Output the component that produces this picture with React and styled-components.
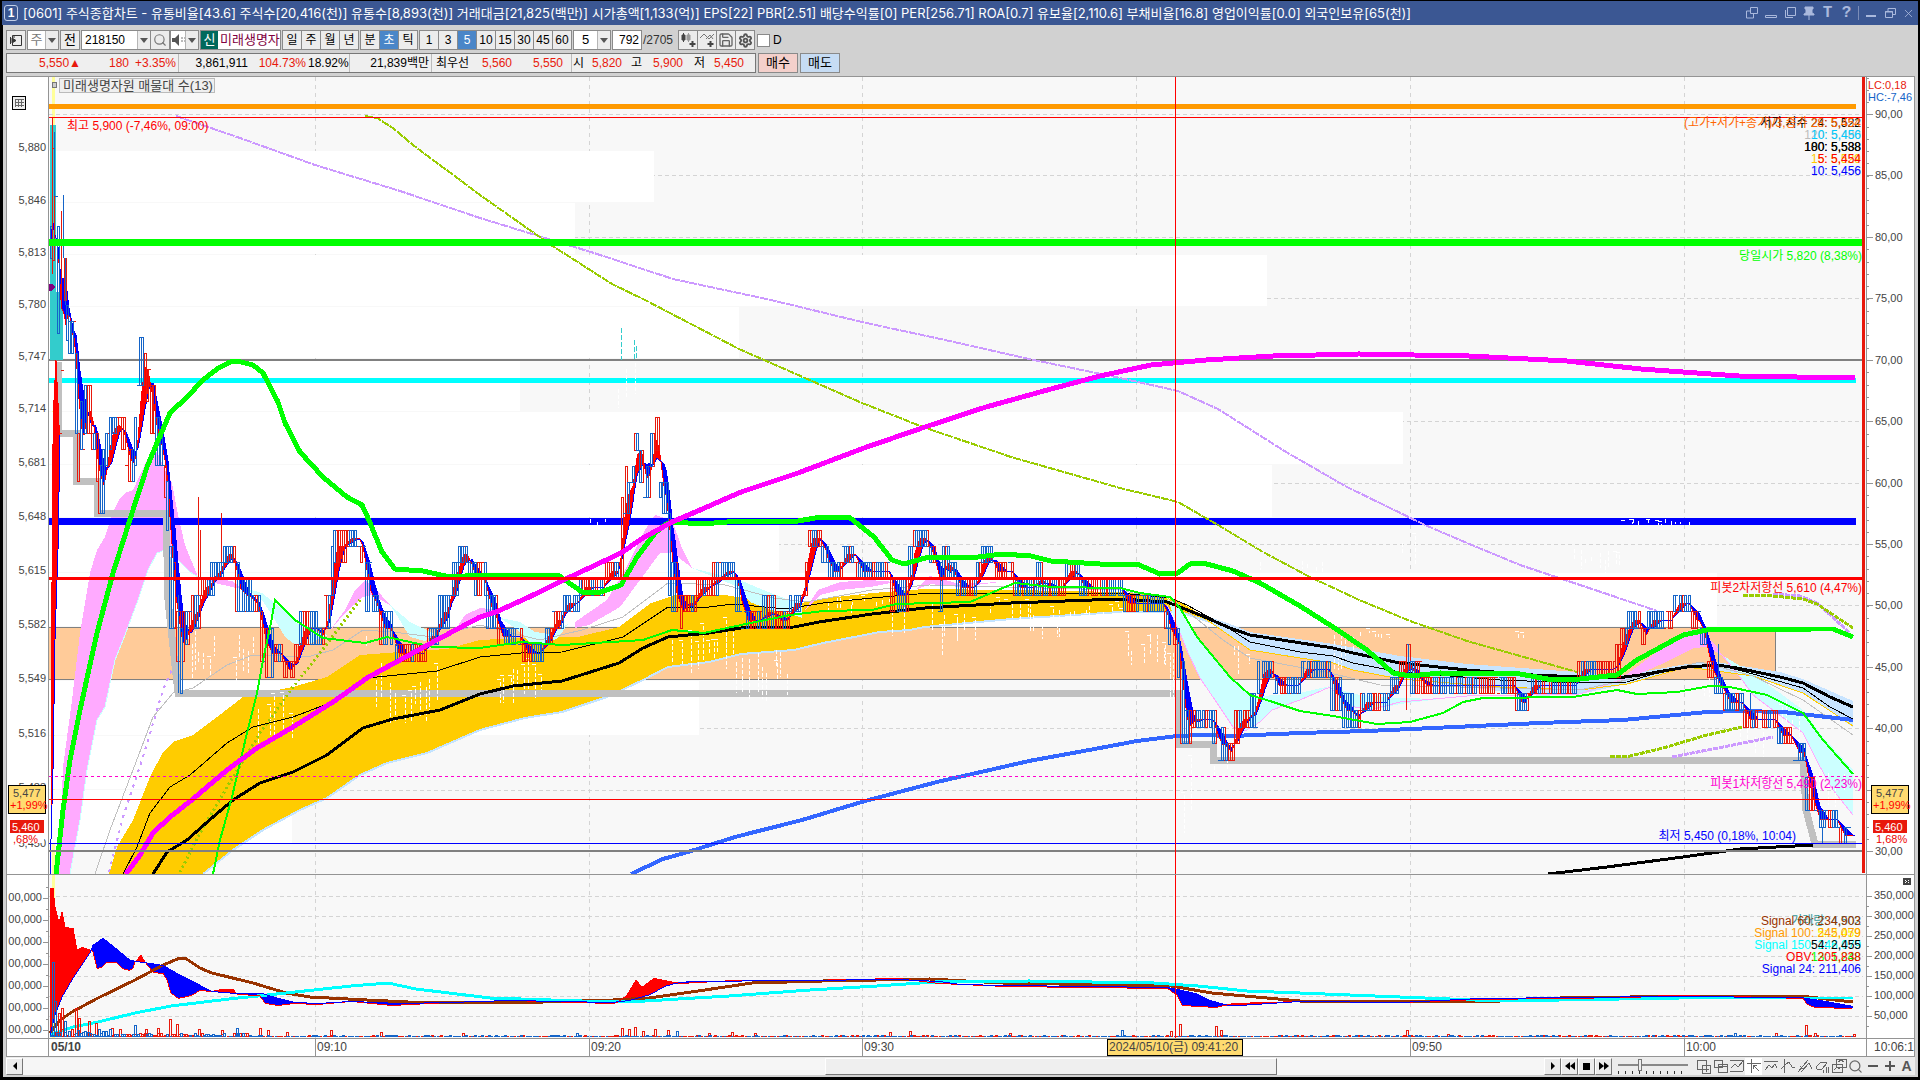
import React, { useState } from "react";
import styled, { createGlobalStyle } from "styled-components";
import { Search, Settings, Save, X } from "lucide-react";

// =========================================================
// 데이터
// =========================================================

const TITLE =
  "[0601] 주식종합차트 - 유통비율[43.6] 주식수[20,416(천)] 유통수[8,893(천)] 거래대금[21,825(백만)] 시가총액[1,133(억)] EPS[22] PBR[2.51] 배당수익률[0] PER[256.71] ROA[0.7] 유보율[2,110.6] 부채비율[16.8] 영업이익률[0.0] 외국인보유[65(천)]";

const PERIODS = ["일", "주", "월", "년"];
const UNITS = ["분", "초", "틱"];
const STEPS = ["1", "3", "5", "10", "15", "30", "45", "60"];

const QUOTES = [
  { text: "5,550▲", width: 76, red: true },
  { text: "180", width: 48, red: true },
  { text: "+3.35%", width: 48, red: true, line: true },
  { text: "3,861,911", width: 71 },
  { text: "104.73%", width: 58, red: true },
  { text: "18.92%", width: 42, line: true },
  { text: "21,839백만", width: 82, line: true },
  { text: "최우선", width: 39 },
  { text: "5,560", width: 43, red: true },
  { text: "5,550", width: 58, red: true, line: true, pad: 8 },
  { text: "시", width: 14 },
  { text: "5,820", width: 38, red: true },
  { text: "고", width: 20 },
  { text: "5,900", width: 41, red: true },
  { text: "저", width: 22 },
  { text: "5,450", width: 39, red: true },
];

// [시작 x, 고가 y, 저가 y]
const SEGMENTS = [
  [50, 226, 258], [52, 148, 260], [54, 196, 320], [57, 226, 333], [59, 300, 433],
  [61, 290, 370], [63, 258, 300], [65, 305, 340], [68, 321, 353], [72, 321, 369],
  [75, 353, 433], [77, 433, 481], [80, 401, 449], [84, 385, 433], [91, 433, 449],
  [94, 433, 481], [97, 465, 513], [101, 449, 513], [105, 433, 465], [108, 417, 449],
  [112, 417, 433], [120, 417, 449], [124, 433, 465], [127, 449, 481], [134, 417, 465],
  [137, 385, 417], [139, 337, 385], [143, 353, 385], [146, 369, 401], [150, 385, 433],
  [154, 417, 465], [159, 433, 465], [163, 465, 497], [166, 481, 530], [169, 546, 628],
  [172, 562, 628], [176, 611, 661], [180, 628, 693], [182, 611, 661], [185, 611, 644],
  [190, 595, 628], [199, 579, 595], [209, 562, 595], [214, 562, 579], [222, 546, 562],
  [234, 562, 611], [240, 579, 611], [250, 595, 611], [259, 611, 661], [265, 628, 677],
  [272, 644, 661], [282, 661, 677], [293, 644, 661], [299, 611, 644], [317, 628, 644],
  [324, 595, 628], [329, 546, 595], [332, 530, 562], [345, 530, 546], [360, 546, 562],
  [364, 562, 611], [370, 595, 611], [378, 611, 644], [392, 644, 661], [425, 628, 644],
  [437, 595, 628], [449, 562, 595], [457, 546, 562], [468, 562, 579], [473, 562, 595],
  [486, 595, 628], [496, 628, 644], [521, 644, 661], [542, 628, 644], [551, 611, 628],
  [562, 595, 611], [579, 579, 595], [605, 562, 579], [619, 497, 577], [622, 466, 513],
  [626, 482, 513], [630, 466, 482], [634, 433, 450], [639, 450, 482], [643, 466, 497],
  [649, 433, 466], [653, 417, 450], [658, 482, 497], [662, 482, 513], [667, 513, 595],
  [670, 562, 611], [676, 595, 628], [684, 595, 611], [696, 579, 595], [711, 562, 595],
  [721, 562, 579], [735, 579, 611], [741, 611, 628], [762, 595, 628], [774, 611, 628],
  [789, 595, 611], [801, 562, 595], [806, 530, 546], [821, 546, 562], [827, 562, 579],
  [841, 546, 562], [856, 562, 579], [890, 579, 611], [908, 546, 579], [913, 530, 546],
  [927, 546, 562], [935, 562, 611], [941, 546, 579], [949, 562, 579], [955, 579, 595],
  [976, 562, 579], [981, 546, 562], [991, 562, 579], [1013, 579, 595], [1035, 562, 595],
  [1043, 579, 595], [1064, 562, 579], [1078, 579, 595], [1122, 595, 611], [1164, 611, 628],
  [1168, 628, 644], [1176, 628, 677], [1180, 661, 743], [1183, 710, 743], [1190, 710, 727],
  [1212, 710, 743], [1215, 727, 760], [1225, 743, 760], [1233, 710, 743], [1238, 710, 727],
  [1250, 693, 727], [1257, 661, 693], [1262, 661, 677], [1272, 677, 693], [1300, 661, 677],
  [1330, 677, 710], [1340, 693, 727], [1352, 710, 727], [1360, 693, 710], [1388, 677, 693],
  [1399, 661, 677], [1404, 644, 677], [1410, 661, 693], [1420, 677, 693], [1515, 693, 710],
  [1527, 677, 693], [1577, 661, 677], [1615, 644, 677], [1619, 628, 644], [1627, 611, 628],
  [1640, 628, 644], [1647, 611, 628], [1673, 595, 611], [1690, 611, 628], [1700, 628, 644],
  [1706, 661, 677], [1714, 677, 693], [1723, 693, 710], [1743, 710, 727], [1776, 727, 743],
  [1792, 743, 760], [1805, 777, 810], [1813, 810, 827], [1838, 827, 843],
];

// 매물대 막대: [y, 높이, 오른쪽 끝 x]
const VOLUME_ROWS = [
  [151, 51, 654], [203, 51, 575], [255, 51, 1267], [307, 51, 739], [361, 50, 520],
  [412, 52, 1403], [465, 52, 1272], [518, 54, 779], [573, 53, 1717], [681, 54, 699],
  [736, 53, 320], [790, 53, 292],
];

const GRID_X = [315, 589, 862, 1136, 1410, 1684];

const LEFT_LABELS = [
  ["5,880", 147], ["5,846", 200], ["5,813", 252], ["5,780", 304], ["5,747", 356],
  ["5,714", 408], ["5,681", 462], ["5,648", 516], ["5,615", 570], ["5,582", 624],
  ["5,549", 678], ["5,516", 733], ["5,483", 787], ["5,450", 843],
];

const RIGHT_LABELS = ["90,00", "85,00", "80,00", "75,00", "70,00", "65,00", "60,00", "55,00", "50,00", "45,00", "40,00", "35,00", "30,00"];

const OBV_LABELS = ["350,000", "300,000", "250,000", "200,000", "150,000", "100,000", "50,000"];

const LINES = {
  purple: "176,116 240,138 315,165 400,191 480,218 594,253 673,279 771,300 862,322 945,340 1029,359 1120,378 1178,391 1218,409 1286,452 1347,487 1425,525 1467,543 1520,565 1607,594 1657,611",
  purpleRise: "1672,757 1723,747 1773,737",
  purpleTop: "1773,594 1800,596 1817,603 1850,633",
  purpleLeft: "109,872 123,817 143,757 163,690 173,667",
  olive: "365,116 377,118 393,128 413,145 480,195 551,245 612,284 645,300 739,349 862,403 923,427 1011,457 1120,488 1178,502 1218,525 1263,552 1308,576 1357,599 1410,621 1467,641 1577,672",
  oliveRise: "1610,757 1630,756 1663,748 1707,735 1742,727",
  oliveTop: "1743,595 1773,596 1803,599 1817,604 1853,628",
  oliveLeft: "180,872 200,833 233,777 260,733 293,687 320,653 360,600",
  green: "56,874 63,810 70,760 80,710 97,633 113,573 133,510 147,467 157,443 170,413 187,397 203,380 217,369 230,362 237,361 253,365 263,373 278,402 285,423 300,452 323,477 347,497 362,505 368,518 382,552 395,569 423,571 450,577 480,575 558,575 582,592 598,593 621,585 637,557 655,533 666,524 676,522 700,524 741,521 798,521 821,517 849,517 874,537 892,560 904,564 929,557 978,557 1002,554 1031,556 1051,561 1084,563 1100,564 1137,564 1160,574 1178,573 1190,564 1203,563 1233,571 1260,583 1300,606 1333,627 1367,650 1393,673 1410,676 1440,673 1520,674 1553,680 1580,679 1617,675 1637,660 1683,635 1707,630 1813,629 1833,629 1853,637",
  greenThin: "213,874 220,840 232,797 247,733 257,693 263,660 271,623 275,600 295,620 323,638 365,643 387,637 433,647 480,648 521,642 562,645 643,640 672,630 704,633 741,625 790,615 823,611 872,610 896,604 970,602 998,590 1015,583 1051,587 1120,588 1140,593 1170,597 1180,608 1197,637 1230,677 1250,695 1273,702 1300,711 1333,716 1377,724 1410,722 1443,713 1463,702 1483,698 1573,697 1617,690 1637,694 1677,692 1710,686 1730,687 1767,695 1803,713 1823,740 1853,774",
  magenta: "126,874 140,855 153,833 170,817 193,799 227,770 257,748 293,727 333,702 367,678 400,660 433,642 480,617 496,612 529,597 570,577 621,553 643,538 672,522 700,510 741,492 798,473 864,448 925,427 986,407 1051,389 1100,376 1151,365 1206,360 1273,356 1359,354 1469,356 1567,361 1641,369 1739,376 1855,378",
  black: "153,874 167,852 187,840 213,817 233,800 260,783 293,772 327,755 363,728 393,719 440,710 480,694 513,686 562,681 619,663 643,648 668,637 709,633 741,628 794,627 819,622 872,614 925,608 1011,603 1120,599 1167,602 1180,607 1200,615 1230,628 1250,635 1333,648 1353,653 1400,663 1467,670 1533,675 1580,677 1617,678 1640,675 1687,667 1717,665 1737,668 1780,677 1803,683 1830,697 1853,707",
  blackThin: "123,874 137,847 150,813 170,787 190,775 227,743 253,727 293,717 327,704 367,678 437,671 480,657 521,653 562,652 623,637 668,607 709,607 733,604 786,609 823,603 872,598 929,593 1120,593 1170,598 1187,605 1227,627 1250,642 1300,652 1333,656 1353,663 1400,672 1500,680 1580,683 1627,682 1650,675 1690,666 1727,667 1753,674 1803,688 1830,707 1853,719",
  ochre: "1180,603 1210,622 1250,650 1300,658 1333,663 1353,670 1400,679 1500,687 1580,690 1627,684 1687,667 1753,676 1803,693 1853,726",
  gray: "95,874 110,830 133,770 153,717 173,693 193,688 227,665 253,655 307,657 333,650 363,630 393,632 433,637 480,625 540,640 582,630 623,617 668,583 725,585 774,598 806,602 872,590 929,585 1120,590 1177,603 1223,640 1250,658 1330,673 1380,685 1580,690 1640,677 1700,662 1753,676 1803,700 1853,735",
  blue: "631,874 663,859 688,852 735,837 802,820 865,801 937,782 1029,761 1100,748 1137,741 1177,736 1200,735 1233,736 1300,733 1367,731 1433,728 1540,723 1623,720 1707,712 1740,711 1783,712 1827,717 1853,720",
  blackLow: "1548,874 1607,867 1683,857 1740,849 1813,845",
  step: "58,362 58,433 76,433 76,481 97,481 97,513 166,513 168,600 178,693 1179,693 1179,744 1213,744 1213,760 1803,760 1806,810 1815,844 1856,844",
  bandLow: "203,874 233,850 263,830 300,810 327,798 360,775 387,763 427,753 480,730 525,718 562,712 607,697 643,680 668,667 709,662 741,654 794,650 823,643 880,632 909,630 925,627 1011,619 1120,612 1150,612 1180,612 1210,622",
  pinkLow: "70,874 80,820 87,770 97,720 105,707 115,660 125,635 138,600 148,570 157,553 165,550 178,560 190,572 198,577",
  cyanLow: "1167,605 1180,633 1188,653 1200,678 1217,703 1233,727 1245,731 1260,722 1272,710 1300,700 1330,687 1350,706 1370,710 1400,702 1467,696 1580,694 1640,673 1663,663 1693,648 1707,646 1722,655 1737,673 1753,695 1773,710 1803,733 1818,763 1833,790 1853,815",
};

const BAND_TOP =
  "109,874 117,847 133,820 150,777 163,752 173,742 193,735 217,717 243,697 293,687 327,677 360,655 400,652 447,649 480,640 521,638 578,637 619,627 651,603 676,595 725,595 737,597 802,603 819,599 872,593 925,589 1011,590 1120,592 1150,595 1177,600 1210,620";

const PINK_AREAS = [
  "59,874 63,767 72,700 80,633 90,573 97,550 105,537 113,512 120,498 125,493 133,490 140,475 148,458 157,452 165,470 172,483 178,515 185,545 198,577 190,572 178,560 165,550 157,553 148,570 138,600 125,635 115,660 105,707 97,720 87,770 80,820 70,874",
  "198,577 232,581 245,590 215,583",
  "328,633 345,610 355,590 365,580 375,588 390,605 372,595 363,597 345,613",
  "455,630 465,615 480,608 500,610 480,617",
  "575,622 607,600 625,570 645,530 655,515 672,520 682,548 692,568 673,553 660,553 640,580 620,607 589,625 575,628",
  "805,610 818,590 840,582 870,580 895,582 870,587 840,590 820,595",
  "915,590 930,576 945,580 960,584 1000,582 960,587 930,584",
  "1623,677 1650,657 1683,632 1700,629 1717,647 1722,655 1707,646 1693,648 1663,663 1640,673",
];

const CYAN_AREAS = [
  "245,588 262,593 280,607 295,622 315,632 328,635 317,640 300,648 285,637 272,615 262,600",
  "390,605 410,622 433,633 425,641 410,637 398,617",
  "500,618 520,622 535,632 550,634 568,624 558,638 545,645 530,642 515,628",
  "692,568 720,575 740,580 756,587 789,600 802,604 802,618 785,612 770,610 750,602 738,587",
  "1167,598 1180,608 1197,637 1230,678 1253,697 1275,695 1300,693 1330,686 1300,700 1272,710 1260,722 1245,731 1233,727 1217,703 1200,678 1188,653 1180,633",
  "1333,688 1360,695 1400,698 1440,699 1400,704 1370,710 1350,706",
  "1722,655 1747,670 1773,688 1803,710 1823,737 1853,770 1853,815 1833,790 1818,763 1803,733 1773,710 1753,695 1737,673",
];

const ICE_AREA =
  "1200,614 1230,624 1250,632 1333,644 1400,656 1467,664 1577,672 1617,676 1687,664 1717,662 1780,672 1803,679 1853,701 1853,727 1803,693 1753,676 1687,667 1627,684 1580,694 1540,696 1467,687 1400,678 1353,670 1333,663 1250,650 1210,622";

// 흰 점선이 모여 있는 구간: [x0, x1, y0, y1]
const DOTS = [
  [188, 215, 628, 678], [232, 256, 630, 680], [258, 294, 690, 755], [366, 372, 628, 660],
  [376, 434, 655, 722], [496, 542, 648, 702], [672, 690, 600, 672], [694, 736, 610, 668],
  [736, 794, 645, 700], [828, 864, 593, 612], [876, 890, 594, 606], [892, 904, 600, 675],
  [932, 942, 600, 672], [944, 976, 598, 640], [990, 1010, 595, 612], [1012, 1062, 598, 638],
  [1070, 1120, 600, 624], [1124, 1166, 630, 664], [1166, 1174, 630, 698], [1180, 1192, 750, 832],
  [1214, 1226, 740, 786], [1234, 1252, 640, 682], [1260, 1268, 555, 572], [1302, 1326, 558, 574],
  [1334, 1354, 630, 680], [1360, 1390, 628, 640], [1402, 1414, 528, 572], [1514, 1524, 630, 648],
  [1574, 1620, 548, 572], [1704, 1720, 670, 700], [1740, 1766, 700, 765], [1778, 1800, 690, 760],
  [1812, 1852, 762, 806], [618, 640, 360, 410], [590, 612, 518, 524], [1620, 1690, 517, 524],
];

const OBV = "50,888 53,888 55,907 59,923 62,912 65,927 73,928 77,950 82,947 91,950 93,952 97,968 102,967 107,962 116,962 122,968 129,970 133,968 135,962 141,955 145,962 153,972 163,973 167,980 171,993 178,998 192,995 200,990 212,991 222,989 233,989 237,994 259,995 265,1003 278,1005 294,1003 318,1004 351,1001 392,1005 449,1002 510,1000 612,1003 618,1002 627,995 636,980 642,987 654,978 669,981 680,983 734,980 805,980 899,978 939,983 1006,986 1167,988 1177,995 1182,1005 1216,1007 1234,1003 1300,1001 1400,1002 1480,999 1633,997 1667,995 1733,996 1803,998 1807,1004 1815,1007 1853,1008";
const SIGNAL = "50,1035 55,1015 62,997 75,975 90,953 93,945 103,938 118,950 130,960 150,963 163,965 175,972 185,977 200,985 212,991 235,993 262,993 278,998 295,1002 318,1003 351,1001 400,1003 449,1002 510,1000 612,1002 630,1000 651,994 665,986 675,983 690,981 899,979 939,981 960,984 1006,985 1167,987 1177,989 1195,993 1210,1000 1228,1005 1240,1005 1300,1001 1400,1002 1480,998 1667,996 1800,997 1820,1000 1853,1006";
const BROWN = "50,1033 60,1020 72,1012 98,998 135,980 163,965 180,958 185,958 200,968 212,973 253,983 286,993 310,997 367,1000 408,1002 518,1003 592,1000 613,1000 649,998 698,991 752,983 823,981 930,979 1002,983 1171,986 1212,993 1256,997 1300,1001 1400,1001 1480,1002 1560,998 1700,996 1800,996 1853,1002";
const AQUA = "50,1035 73,1027 98,1022 135,1013 171,1006 229,999 286,993 351,986 388,983 416,989 490,998 612,1002 645,1001 729,996 810,990 877,986 935,982 1029,981 1154,983 1198,986 1247,991 1300,993 1400,997 1500,1001 1680,998 1853,998";

// 거래량이 튀는 자리: [x, 높이]
const SPIKES = [
  [52, 74], [54, 35], [58, 23], [61, 28], [64, 15], [75, 28], [78, 18], [88, 15], [95, 13],
  [111, 8], [119, 7], [134, 11], [145, 7], [157, 8], [169, 17], [176, 12], [198, 7], [221, 6],
  [236, 8], [259, 8], [267, 6], [286, 4], [330, 6], [380, 4], [462, 3], [576, 3], [621, 8],
  [628, 7], [634, 9], [642, 5], [654, 7], [667, 6], [676, 5], [708, 3], [731, 4], [754, 3],
  [889, 4], [909, 5], [1009, 3], [1121, 6], [1170, 5], [1179, 12], [1215, 10], [1220, 6],
  [1406, 6], [1447, 2], [1734, 3], [1775, 3], [1805, 11], [1814, 3], [1853, 2],
];

// =========================================================
// 유틸 함수
// =========================================================

function toPoints(text) {
  return text.split(" ").map((pair) => pair.split(",").map(Number));
}

function valueAt(points, x) {
  for (let i = 1; i < points.length; i++) {
    if (x <= points[i][0]) {
      const [x0, y0] = points[i - 1];
      const [x1, y1] = points[i];
      return y0 + ((y1 - y0) * (x - x0)) / (x1 - x0);
    }
  }
  return points[points.length - 1][1];
}

function createRandom(seed) {
  let value = seed;
  return () => {
    value = (value * 16807) % 2147483647;
    return value / 2147483647;
  };
}

function segmentAt(x) {
  let found = SEGMENTS[0];
  for (const segment of SEGMENTS) {
    if (segment[0] > x) break;
    found = segment;
  }
  return found;
}

function buildCandles() {
  const random = createRandom(77);
  const paths = { red: "", blue: "" };
  let color = "red";
  for (let i = 0; i < 790; i++) {
    const x = Math.round(50 + i * 2.282);
    const [, top, bottom] = segmentAt(x);
    if (random() < 0.38) color = color === "red" ? "blue" : "red";
    const kind = random();
    if (kind < 0.84) {
      paths[color] += `M${x}.5 ${top}.5h2v${bottom - top}h-2z`;
    } else {
      paths[color] += `M${x} ${kind < 0.92 ? top : bottom}.5h3`;
    }
  }
  return paths;
}

function buildAverages() {
  const mids = [];
  for (let x = 50; x < 1856; x++) {
    const [, top, bottom] = segmentAt(x);
    mids.push((top + bottom) / 2);
  }
  const average = (i, size) => {
    const from = Math.max(0, i - size + 1);
    const part = mids.slice(from, i + 1);
    return part.reduce((sum, v) => sum + v, 0) / part.length;
  };
  return buildFill(
    mids.map((_, i) => average(i, 8)),
    mids.map((_, i) => average(i, 16)),
    50,
  );
}

// 두 선 사이를 세로 줄로 채운다 (위쪽이면 빨강, 아래쪽이면 파랑)
function buildFill(fast, slow, start) {
  const paths = { red: "", blue: "", fast: "", slow: "" };
  fast.forEach((y, i) => {
    const x = start + i;
    const key = y < slow[i] ? "red" : "blue";
    paths[key] += `M${x}.5 ${Math.round(y)}V${Math.round(slow[i])}`;
    paths.fast += `${i ? "L" : "M"}${x} ${Math.round(y)}`;
    paths.slow += `${i ? "L" : "M"}${x} ${Math.round(slow[i])}`;
  });
  return paths;
}

function buildObv() {
  const obv = toPoints(OBV);
  const signal = toPoints(SIGNAL);
  const fast = [];
  const slow = [];
  for (let x = 50; x < 1853; x++) {
    fast.push(valueAt(obv, x));
    slow.push(valueAt(signal, x));
  }
  return buildFill(fast, slow, 50);
}

function buildDots() {
  const random = createRandom(31);
  let path = "";
  DOTS.forEach(([x0, x1, y0, y1]) => {
    let x = x0;
    while (x < x1) {
      const top = Math.round(y0 + random() * (y1 - y0) * 0.6);
      const bottom = Math.round(Math.min(y1, top + (y1 - y0) * (0.2 + random() * 0.6)));
      path += `M${x}.5 ${top}.5${random() < 0.4 ? "h4" : ""}V${bottom}.5`;
      x += 3 + Math.floor(random() * 7);
    }
  });
  return path;
}

function buildVolumes() {
  const random = createRandom(9);
  const paths = { red: "", blue: "" };
  for (let i = 0; i < 790; i++) {
    const x = Math.round(50 + i * 2.282);
    const base = x < 110 ? 8 : x < 250 ? 3 : 0;
    const height = Math.round(base * random() + (random() < 0.25 ? 1 : 0));
    const color = random() < 0.4 ? "red" : "blue";
    paths[color] += `M${x}.5 1036.5v-${height}h2v${height}z`;
  }
  SPIKES.forEach(([x, height], i) => {
    const color = i < 2 || i % 7 === 4 ? "blue" : "red";
    paths[color] += `M${x}.5 1036.5v-${height}h2v${height}z`;
  });
  return paths;
}

const candles = buildCandles();
const averages = buildAverages();
const obvFill = buildObv();
const dots = buildDots();
const volumes = buildVolumes();

// =========================================================
// 화면
// =========================================================

function App() {
  const [unit, setUnit] = useState("초");
  const [step, setStep] = useState("5");

  return (
    <Window>
      <GlobalStyle />

      <TitleBar>
        <WindowNo>1</WindowNo>
        <TitleText>{TITLE}</TitleText>
        <TitleTools />
      </TitleBar>

      <Body>
        <Toolbar>
          <IconButton type="button" aria-label="패널">
            <svg width="14" height="14" fill="none" stroke="#333">
              <path d="M3.5 5V2.5h9v10h-9V10M5 5V2.5M1.5 4v7" />
              <path d="M3 5l4 2.500L3 10z" fill="#333" />
            </svg>
          </IconButton>
          <Combo $width={32} $muted>
            <span>주</span>
            <Arrow />
          </Combo>
          <TextButton type="button" $width={20}>전</TextButton>
          <CodeBox>
            <CodeInput aria-label="종목코드" defaultValue="218150" />
            <Arrow />
          </CodeBox>
          <IconButton type="button" aria-label="종목검색" $join>
            <Search size={14} color="#777" />
          </IconButton>
          <Combo $width={29} $join>
            <svg width="15" height="14">
              <path d="M1 5h3l4-4v12l-4-4H1z" fill="#555" />
              <path d="M10 5h2M10 8h2M13 5h1M13 8h1" stroke="#777" />
            </svg>
            <Arrow />
          </Combo>
          <StockName>
            <Badge>신</Badge>
            <span>미래생명자</span>
          </StockName>
          <Group>
            {PERIODS.map((item) => (
              <Cell key={item} type="button">{item}</Cell>
            ))}
          </Group>
          <Group>
            {UNITS.map((item) => (
              <Cell key={item} type="button" $on={unit === item} onClick={() => setUnit(item)}>
                {item}
              </Cell>
            ))}
          </Group>
          <Group>
            {STEPS.map((item) => (
              <Cell key={item} type="button" $on={step === item} onClick={() => setStep(item)}>
                {item}
              </Cell>
            ))}
          </Group>
          <Combo $width={38}>
            <span>5</span>
            <Arrow />
          </Combo>
          <CountInput aria-label="조회 개수" defaultValue="792" />
          <Total>/2705</Total>
          <Group>
            <Cell type="button" aria-label="지표 추가">
              <svg width="16" height="16" fill="#444" stroke="#444">
                <path d="M2 3h3v5H2zM3.5 1v9" />
                <path d="M7 3h3v5H7zM8.5 1v9" fill="#999" stroke="#999" />
                <path d="M12.5 9v6M9.5 12h6" strokeWidth="2" />
              </svg>
            </Cell>
            <Cell type="button" aria-label="신호 추가">
              <svg width="16" height="16" fill="none" stroke="#777">
                <path d="M1 6l4-4 5 5 5-5M7 7l4-4 3 4" />
                <path d="M11.500 9v6M8.500 12h6" stroke="#444" strokeWidth="2" />
              </svg>
            </Cell>
            <Cell type="button" aria-label="저장">
              <Save size={16} color="#666" strokeWidth={2} />
            </Cell>
            <Cell type="button" aria-label="설정">
              <Settings size={15} color="#555" strokeWidth={3} />
            </Cell>
          </Group>
          <CheckLabel>
            <input type="checkbox" />D
          </CheckLabel>
        </Toolbar>

        <QuoteRow>
          <Quotes>
            {QUOTES.map((quote, index) => (
              <Quote key={index} $width={quote.width} $red={quote.red} $line={quote.line} $pad={quote.pad}>
                {quote.text}
              </Quote>
            ))}
          </Quotes>
          <OrderButton type="button" $color="#f4d0cb">매수</OrderButton>
          <OrderButton type="button" $color="#c6dcf4">매도</OrderButton>
        </QuoteRow>

        <Frame>
          <Panel $grow={797}>
            <LeftAxis />
            <MainPlot />
            <RightAxis />
          </Panel>
          <Panel $grow={163}>
            <ObvLeftAxis />
            <ObvPlot />
            <ObvRightAxis />
          </Panel>
          <TimeRow>
            <TimeAxis />
          </TimeRow>
        </Frame>

        <BottomBar />
      </Body>
    </Window>
  );
}

export default App;

function Arrow() {
  return (
    <ArrowBox>
      <svg width="8" height="5">
        <path d="M0 0h8l-4 5z" fill="#555" />
      </svg>
    </ArrowBox>
  );
}

function TitleTools() {
  return (
    <Tools>
      <ToolButton type="button" aria-label="분리">
        <svg width="14" height="14"><path d="M5.500 1.500h7v6h-7zM5 5H1.500v7h7V8" /></svg>
      </ToolButton>
      <ToolButton type="button" aria-label="축소">
        <svg width="14" height="14"><path d="M1.500 9.500h11v2h-11z" /></svg>
      </ToolButton>
      <ToolButton type="button" aria-label="확대">
        <svg width="14" height="14"><path d="M4.500 1.500h8v8h-8zM2.500 4v7.500H10" /></svg>
      </ToolButton>
      <ToolButton type="button" aria-label="고정">
        <PinShape width="14" height="14"><path d="M3 1h8v2h-1v4l2 1v1H2V8l2-1V3H3zM7 9v5" /></PinShape>
      </ToolButton>
      <ToolButton type="button">T</ToolButton>
      <ToolButton type="button">?</ToolButton>
      <ToolLine />
      <ToolButton type="button" aria-label="최소화">
        <svg width="14" height="14"><path d="M2 10h10" strokeWidth="2" /></svg>
      </ToolButton>
      <ToolButton type="button" aria-label="복원">
        <svg width="14" height="14"><path d="M5 5V2.500h7.500v6H10M2.500 5.500h7v6h-7zM2 6h8" /></svg>
      </ToolButton>
      <ToolButton type="button" aria-label="닫기">
        <X size={13} color="#aab9dd" strokeWidth={1.5} />
      </ToolButton>
    </Tools>
  );
}

function Line({ points, color, width = 1, dash }) {
  return <polyline points={points} fill="none" stroke={color} strokeWidth={width} strokeDasharray={dash} />;
}

function Rule({ y, color, width = 1, end = 1863, dash }) {
  return <path d={`M49 ${y}H${end}`} stroke={color} strokeWidth={width} strokeDasharray={dash} />;
}

function Label({ x, y, color, end, children }) {
  return (
    <text x={x} y={y} fill={color} textAnchor={end ? "end" : "start"}>
      {children}
    </text>
  );
}

function LeftAxis() {
  return (
    <AxisChart viewBox="7 77 42 797" preserveAspectRatio="none">
      {LEFT_LABELS.map(([text, y]) => (
        <Label key={text} x={46} y={y + 4} color="#444" end>{text}</Label>
      ))}
      <rect x="12.5" y="96.5" width="13" height="13" fill="#eee" stroke="#000" />
      <path d="M15 99.500h9M15 102.500h9M15 105.500h9M15.500 99v8M18.500 99v8M21.500 99v8" stroke="#666" />
      <PriceTags x={8} />
      <path d="M48.500 77V874" stroke="#949494" />
    </AxisChart>
  );
}

function PriceTags({ x }) {
  return (
    <g>
      <rect x={x + 0.5} y="785.5" width="37" height="28" fill="#ffdb70" stroke="#000" />
      <Label x={x + 5} y={797} color="#444">5,477</Label>
      <Label x={x + 2} y={809} color="#f00">+1,99%</Label>
      <rect x={x + 2} y="820" width="34" height="13" fill="#e8190c" />
      <Label x={x + 4} y={831} color="#fff">5,460</Label>
      <rect x={x + 4} y="834" width="32" height="9" fill="#fff" />
      <Label x={x + 5} y={843} color="#e00">{x < 20 ? ",68%" : "1,68%"}</Label>
    </g>
  );
}

function MainPlot() {
  return (
    <Chart viewBox="49 77 1817 797" preserveAspectRatio="none">
      <rect x="49" y="77" width="1817" height="797" fill="#f8f8f8" />
      <rect x="52" y="77" width="3" height="797" fill="#ffff99" />
      {GRID_X.map((x) => (
        <path key={x} d={`M${x}.5 77V874`} stroke="#d4d4d4" strokeDasharray="4 4" />
      ))}
      {RIGHT_LABELS.map((label, i) => (
        <Rule key={label} y={Math.round(114 + i * 61.42) + 0.5} color="#d4d4d4" dash="4 3" />
      ))}
      {VOLUME_ROWS.map(([y, height, end]) => (
        <rect key={y} x="49" y={y} width={end - 49} height={height} fill="#fff" />
      ))}
      <rect x="48.5" y="627.5" width="1727" height="52" fill="#ffcb99" stroke="#808080" />

      {/* 이평 밴드 */}
      <polygon points={`${BAND_TOP} ${LINES.bandLow.split(" ").reverse().join(" ")}`} fill="#ffcc00" />
      <Line points={LINES.bandLow} color="#c4e4ff" width={2} />
      <polygon points={ICE_AREA} fill="#c8e4ff" />
      {PINK_AREAS.map((points) => (
        <polygon key={points} points={points} fill="#ffaaff" />
      ))}
      {CYAN_AREAS.map((points) => (
        <polygon key={points} points={points} fill="#ccffff" />
      ))}
      <Line points={LINES.pinkLow} color="#ccffff" />
      <Line points={LINES.cyanLow} color="#ffaaff" />
      <Line points={LINES.ochre} color="#ffcc00" />
      <Line points={LINES.gray} color="#c0c0c0" />

      <Rule y={360} color="#808080" width={2} />
      <Rule y={380.5} color="#0ff" width={5} end={1856} />
      <Rule y={521.5} color="#00f" width={7} end={1856} />
      <Line points={LINES.step} color="#c0c0c0" width={7} />
      <rect x="50" y="125" width="6" height="235" fill="#33cccc" />
      <rect x="56" y="292" width="7" height="68" fill="#33cccc" />
      <path d="M621.500 328V360M634.500 340V360M636 346V360" stroke="#33cccc" strokeDasharray="5 2" />

      <path d={dots} fill="none" stroke="#fff" strokeDasharray="4 2" />

      <Line points={LINES.purple} color="#cc99ff" width={2} dash="8 1" />
      <Line points={LINES.purpleRise} color="#cc99ff" width={3} dash="5 1" />
      <Line points={LINES.purpleTop} color="#cc99ff" width={3} dash="5 1" />
      <Line points={LINES.purpleLeft} color="#cc99ff" width={2} dash="3 5" />
      <Line points={LINES.olive} color="#99cc00" width={2} dash="8 1" />
      <Line points={LINES.oliveRise} color="#99cc00" width={3} dash="5 1" />
      <Line points={LINES.oliveTop} color="#99cc00" width={3} dash="5 1" />
      <Line points={LINES.oliveLeft} color="#99cc00" width={3} dash="2 3" />
      <Line points={LINES.blue} color="#3366ff" width={4} />
      <Line points={LINES.blackLow} color="#000" width={3} />
      <Line points={LINES.black} color="#000" width={3} />
      <Line points={LINES.blackThin} color="#000" />

      {/* 캔들 */}
      <polygon points="51,845 51,692 52,480 53,410 56,350 60,435 58,550 55,640 53,770" fill="#f00" />
      <Line points="60,435 58,550 55,640 53,770 50,874" color="#00f" />
      <path d={averages.red} stroke="#f00" />
      <path d={averages.blue} stroke="#00f" />
      <path d={averages.fast} fill="none" stroke="#f00" />
      <path d={averages.slow} fill="none" stroke="#00f" />
      <path d={candles.red} fill="none" stroke="#e8190c" />
      <path d={candles.blue} fill="none" stroke="#1464c8" />
      <path d="M52.500 118V274M61.500 211V300M198.500 497V595M200.500 530V580M221.500 513V562M1406.500 644V710" stroke="#e8190c" />
      <path d="M54.500 132V196M63.500 195V258M65.500 258V305M178.500 595V693M1718.500 644V677M1750.500 693V710M1822.500 827V843" stroke="#1464c8" />
      <path d="M49 284h3l3 3-3 4h-3z" fill="#800080" />

      <Line points={LINES.greenThin} color="#0f0" width={2} />
      <Line points={LINES.green} color="#0f0" width={5} />
      <Line points={LINES.magenta} color="#f0f" width={5} />

      <Rule y={106.5} color="#ff9a00" width={5} end={1856} />
      <Rule y={117.5} color="#f00" />
      <Rule y={242.5} color="#0f0" width={7} />
      <Rule y={578.5} color="#f00" width={3} />
      <Rule y={776.5} color="#ff00d0" dash="3 3" />
      <Rule y={799.5} color="#f00" />
      <Rule y={843.5} color="#00f" />
      <Rule y={851} color="#808080" width={2} />
      <path d="M1175.500 77V874" stroke="#f00" />
      <path d="M1863.500 77V873" stroke="#e8190c" strokeWidth="3" />

      <rect x="52.500" y="82.500" width="4" height="5" fill="#ccc" stroke="#777" />
      <rect x="59.500" y="78.500" width="155" height="14" fill="#efefef" stroke="#bbb" />
      <WideText x="63" y="90" fill="#444">미래생명자원 매물대 수(13)</WideText>
      <Label x={67} y={130} color="#f00">최고 5,900 (-7,46%, 09:00)</Label>
      <Label x={1861} y={127} color="#000" end>저가 지수 24: 5,522</Label>
      <Label x={1861} y={127} color="#ff6600" end>(고가+저가+종가)/3,종가 28: 5,454</Label>
      <Label x={1861} y={139} color="#bbb" end>120: 5,480</Label>
      <Label x={1861} y={139} color="#00ccff" end>10: 5,456</Label>
      <Label x={1861} y={151} color="#000" end>180: 5,538</Label>
      <Label x={1861} y={151} color="#000" end>100: 5,588</Label>
      <Label x={1861} y={163} color="#ffcc00" end>15: 5,529</Label>
      <Label x={1861} y={163} color="#f00" end>5: 5,454</Label>
      <Label x={1861} y={175} color="#c8e4ff" end>30: 5,456</Label>
      <Label x={1861} y={175} color="#00f" end>10: 5,456</Label>
      <Label x={1862} y={260} color="#0f0" end>당일시가 5,820 (8,38%)</Label>
      <Label x={1862} y={592} color="#f00" end>피봇2차저항선 5,610 (4,47%)</Label>
      <Label x={1862} y={788} color="#ff00d0" end>피봇1차저항선 5,490 (2,23%)</Label>
      <Label x={1796} y={840} color="#00f" end>최저 5,450 (0,18%, 10:04)</Label>
    </Chart>
  );
}

function RightAxis() {
  const ticks = [];
  for (let i = 0; i < 64; i++) ticks.push(Math.round(77 + i * 12.28 + 0.5));
  return (
    <AxisChart viewBox="1866 77 48 797" preserveAspectRatio="none">
      <path d="M1866.500 77V874" stroke="#949494" />
      {ticks.map((y) => (
        <path key={y} d={`M1866 ${y}.5h3`} stroke="#949494" />
      ))}
      <Label x={1868} y={89} color="#e8190c">LC:0,18</Label>
      <Label x={1868} y={101} color="#1464c8">HC:-7,46</Label>
      {RIGHT_LABELS.map((text, i) => {
        const y = Math.round(114 + i * 61.42);
        return (
          <g key={text}>
            <path d={`M1866 ${y}.5h7`} stroke="#949494" />
            <Label x={1875} y={y + 4} color="#444">{text}</Label>
          </g>
        );
      })}
      <PriceTags x={1871} />
    </AxisChart>
  );
}

function ObvLeftAxis() {
  return (
    <AxisChart viewBox="7 875 42 163" preserveAspectRatio="none">
      {[897, 919, 941, 963, 985, 1007, 1029].map((y) => (
        <g key={y}>
          <Label x={42} y={y + 4} color="#444" end>00,000</Label>
          <path d={`M43 ${y + 1}.5h6M46 ${y - 10}.5h3`} stroke="#949494" />
        </g>
      ))}
      <path d="M48.500 875V1038" stroke="#949494" />
    </AxisChart>
  );
}

function ObvPlot() {
  return (
    <Chart viewBox="49 875 1817 163" preserveAspectRatio="none">
      <rect x="49" y="875" width="1817" height="163" fill="#f8f8f8" />
      <rect x="52" y="875" width="3" height="163" fill="#ffff99" />
      {GRID_X.map((x) => (
        <path key={x} d={`M${x}.5 875V1038`} stroke="#d4d4d4" strokeDasharray="4 4" />
      ))}
      {[896, 916, 936, 956, 976, 996, 1016].map((y) => (
        <Rule key={y} y={y + 0.5} color="#d4d4d4" dash="4 3" />
      ))}
      <path d={obvFill.red} stroke="#f00" />
      <path d={obvFill.blue} stroke="#00f" />
      <Line points={BROWN} color="#993300" width={3} />
      <Line points={AQUA} color="#0ff" width={3} />
      <path d={obvFill.fast} fill="none" stroke="#f00" />
      <path d={obvFill.slow} fill="none" stroke="#00f" />
      <path d={volumes.red} fill="none" stroke="#e8190c" />
      <path d={volumes.blue} fill="none" stroke="#1464c8" />
      <path d="M1175.500 875V1038" stroke="#f00" />
      <Label x={1861} y={925} color="#339999" end>거래량: 4,502</Label>
      <Label x={1861} y={925} color="#993300" end>Signal 60: 234,903</Label>
      <Label x={1861} y={937} color="#ff0" end>5: 2,459</Label>
      <Label x={1861} y={937} color="#ff9a00" end>Signal 100: 245,079</Label>
      <Label x={1861} y={949} color="#0ff" end>Signal 150: 246,079</Label>
      <Label x={1861} y={949} color="#000" end>54: 2,455</Label>
      <Label x={1861} y={961} color="#0f0" end>13: 1,248</Label>
      <Label x={1861} y={961} color="#f00" end>OBV: 205,838</Label>
      <Label x={1861} y={973} color="#00f" end>Signal 24: 211,406</Label>
    </Chart>
  );
}

function ObvRightAxis() {
  return (
    <AxisChart viewBox="1866 875 48 163" preserveAspectRatio="none">
      <path d="M1866.500 875V1038" stroke="#949494" />
      {OBV_LABELS.map((text, i) => (
        <g key={text}>
          <path d={`M1866 ${896 + i * 20}.5h6M1866 ${906 + i * 20}.5h3`} stroke="#949494" />
          <Label x={1874} y={899 + i * 20} color="#444">{text}</Label>
        </g>
      ))}
      <rect x="1903" y="878" width="8" height="7" fill="#444" />
      <path d="M1905 880h1v1h1v1h-1v1h-1v-1h1v-1h-1zM1908 880h1v1h-1zM1908 882h1v1h-1z" fill="#fff" />
    </AxisChart>
  );
}

function TimeAxis() {
  const labels = ["09:10", "09:20", "09:30", "", "09:50", "10:00"];
  return (
    <Chart viewBox="7 1039 1907 17" preserveAspectRatio="none">
      <path d="M48.500 1039V1056M1866.500 1039V1056" stroke="#949494" />
      <text x="51" y="1051" fill="#444" fontWeight="bold">05/10</text>
      {GRID_X.map((x, i) =>
        labels[i] ? (
          <g key={x}>
            <path d={`M${x}.5 1039V1056`} stroke="#949494" />
            <Label x={x + 2} y={1051} color="#444">{labels[i]}</Label>
          </g>
        ) : null,
      )}
      <Label x={1874} y={1051} color="#444">10:06:1</Label>
      <rect x="1107.5" y="1039.5" width="135" height="16" fill="#ffdb70" stroke="#000" />
      <Label x={1109} y={1051} color="#444">2024/05/10(금) 09:41:20</Label>
    </Chart>
  );
}

const CHART_TOOLS = [
  ["영역 추가", "M2 2h9v9H2zM7 7h8v8H7zM11 8v6M8 11h6"],
  ["창 복사", "M2 2h8v7H2zM6 6h9v8H6zM6 8h9"],
  ["구간", "M1 2h13M1 13h13M2 10l4-4 3 3 5-6M14 2v11"],
  ["십자선", "M1 5h14M5 1v14M7 7l6 6M7 11V7h4"],
  ["추세선", "M1 3h14M2 12l4-5 3 3 3-4 2 4"],
  ["수직선", "M4 1v14M1 11l4-4 4-3 3 5 3 1"],
  ["평행선", "M1 14L11 2M4 14l8-9 3 6M3 8l3 3"],
  ["지우개", "M2 9l5-5 6 1-5 6H3zM9 12v3M12 9v6M14 9v6"],
  ["그림 저장", "M5 1h10v8H5zM1 6h10v8H1zM3 12l3-3 3 2M7 4l3-2 3 2"],
];

function BottomBar() {
  return (
    <Bottom>
      <PlayButton type="button" aria-label="왼쪽으로">
        <svg width="6" height="8"><path d="M5 0v8L1 4z" /></svg>
      </PlayButton>
      <Track>
        <Thumb type="button" aria-label="스크롤" />
      </Track>
      <PlayButton type="button" aria-label="재생">
        <svg width="6" height="8"><path d="M1 0v8l4-4z" /></svg>
      </PlayButton>
      <PlayButton type="button" aria-label="뒤로">
        <svg width="10" height="8"><path d="M5 0v8L0 4zM10 0v8L5 4z" /></svg>
      </PlayButton>
      <PlayButton type="button" aria-label="정지">
        <svg width="7" height="7"><path d="M0 0h7v7H0z" /></svg>
      </PlayButton>
      <PlayButton type="button" aria-label="앞으로">
        <svg width="10" height="8"><path d="M0 0v8l5-4zM5 0v8l5-4z" /></svg>
      </PlayButton>
      <SpeedBox>
        <Speed type="range" aria-label="속도" min="0" max="10" defaultValue="3" />
        <SpeedTicks />
      </SpeedBox>
      {CHART_TOOLS.map(([label, path], index) => (
        <ToolIcon key={label} type="button" aria-label={label} $on={index === 3}>
          <svg width="16" height="16" fill="none" stroke="#666" shapeRendering="crispEdges"><path d={path} /></svg>
        </ToolIcon>
      ))}
      <ToolIcon type="button" aria-label="돋보기">
        <Search size={15} color="#666" />
      </ToolIcon>
      <ToolIcon type="button" aria-label="작게">
        <svg width="14" height="14"><path d="M2 7h10" stroke="#555" strokeWidth="2" /></svg>
      </ToolIcon>
      <ToolIcon type="button" aria-label="크게">
        <svg width="14" height="14"><path d="M2 7h10M7 2v10" stroke="#555" strokeWidth="2" /></svg>
      </ToolIcon>
      <ToolIcon type="button">A</ToolIcon>
    </Bottom>
  );
}

// =========================================================
// styled-components
// =========================================================

const FONT = `"Liberation Sans", "Noto Sans CJK KR", sans-serif`;

const GlobalStyle = createGlobalStyle`
  * {
    box-sizing: border-box;
  }

  body {
    margin: 0;
    background: #000000;
    font-family: ${FONT};
    font-size: 12px;
  }

  button,
  input {
    margin: 0;
    padding: 0;
    font: inherit;
    color: inherit;
  }
`;

const Window = styled.div`
  display: flex;
  flex-direction: column;

  height: 100vh;
  padding: 1px 2px 3px;

  background: #000000;
`;

const TitleBar = styled.header`
  display: flex;
  align-items: center;
  flex: none;

  height: 24px;
  padding: 0 2px;

  background: #3b5793;
  color: #ffffff;
`;

const WindowNo = styled.span`
  width: 14px;
  height: 16px;
  margin-right: 5px;

  border: 1px solid #c3cfe8;
  border-radius: 3px;

  font-size: 12px;
  font-weight: 700;
  line-height: 14px;
  text-align: center;
`;

const TitleText = styled.h1`
  flex: 1;
  margin: 0;

  overflow: hidden;

  font-family: Inter, "Noto Sans CJK KR", sans-serif;
  font-size: 13px;
  font-weight: 400;
  line-height: 22px;
  white-space: pre;
`;

const Tools = styled.div`
  display: flex;
  align-items: center;
  gap: 4px;
`;

const ToolButton = styled.button`
  display: flex;
  align-items: center;
  justify-content: center;

  width: 15px;
  height: 18px;

  border: none;
  background: none;

  font-family: "Liberation Mono", monospace;
  font-size: 16px;
  font-weight: 700;
  color: #aab9dd;

  svg {
    fill: none;
    stroke: #aab9dd;
  }
`;

const PinShape = styled.svg`
  path {
    fill: #aab9dd;
  }
`;

const ToolLine = styled.span`
  width: 1px;
  height: 14px;

  background: #7c8db8;
`;

const Body = styled.main`
  display: flex;
  flex: 1;
  flex-direction: column;

  min-height: 0;
  margin-left: 1px;
  padding: 5px 3px 2px;

  background: #d1d1d1;
`;

const Toolbar = styled.div`
  display: flex;
  align-items: center;
  gap: 1px;
  flex: none;

  height: 20px;
`;

const IconButton = styled.button`
  display: flex;
  align-items: center;
  justify-content: center;

  width: 20px;
  height: 20px;
  margin-left: ${(props) => (props.$join ? "-2px" : "0")};

  border: 1px solid #8a8a8a;
  background: #ececec;
`;

const TextButton = styled.button`
  width: ${(props) => props.$width}px;
  height: 20px;

  border: 1px solid #8a8a8a;
  background: #ececec;

  font-size: 13px;
  line-height: 16px;
`;

const Combo = styled.div`
  display: flex;
  align-items: center;
  justify-content: space-between;

  width: ${(props) => props.$width}px;
  height: 20px;
  margin-left: ${(props) => (props.$join ? "-1px" : "0")};

  border: 1px solid #8a8a8a;
  background: #ffffff;
  color: ${(props) => (props.$muted ? "#777777" : "#000000")};

  font-size: 13px;
  line-height: 18px;

  > span:first-child {
    flex: 1;
    text-align: center;
  }
`;

const ArrowBox = styled.span`
  display: flex;
  align-items: center;
  justify-content: center;

  width: 13px;
  height: 18px;

  border-left: 1px solid #b5b5b5;
  background: #ececec;
`;

const CodeBox = styled.div`
  display: flex;

  width: 70px;
  height: 20px;

  border: 1px solid #8a8a8a;
  background: #ffffff;
`;

const CodeInput = styled.input`
  flex: 1;
  min-width: 0;
  padding-left: 3px;

  border: none;
  outline: none;
`;

const StockName = styled.div`
  display: flex;
  align-items: center;

  width: 81px;
  height: 20px;

  overflow: hidden;

  border: 1px solid #8a8a8a;
  background: #ffffff;

  font-size: 13px;
  line-height: 18px;
  white-space: nowrap;
  color: #800040;
`;

const Badge = styled.span`
  flex: none;
  width: 17px;
  margin-right: 2px;

  background: #00695c;

  text-align: center;
  color: #ffffff;
`;

const Group = styled.div`
  display: flex;

  padding-right: 1px;
`;

const Cell = styled.button`
  display: flex;
  align-items: center;
  justify-content: center;

  width: 20px;
  height: 20px;
  margin-right: -1px;

  border: 1px solid #8a8a8a;
  background: ${(props) => (props.$on ? "#4a86c8" : "#ececec")};
  color: ${(props) => (props.$on ? "#ffffff" : "#000000")};

  line-height: 16px;
`;

const CountInput = styled.input`
  width: 30px;
  height: 20px;
  padding-right: 2px;

  border: 1px solid #8a8a8a;
  background: #ffffff;

  text-align: right;
`;

const Total = styled.span`
  width: 34px;

  color: #333333;
`;

const CheckLabel = styled.label`
  display: flex;
  align-items: center;
  gap: 3px;

  margin-left: 1px;

  input {
    width: 13px;
    height: 13px;

    appearance: none;

    border: 1px solid #8a8a8a;
    background: #ffffff;
  }
`;

const QuoteRow = styled.div`
  display: flex;
  gap: 2px;
  flex: none;

  height: 20px;
  margin: 3px 0;
`;

const Quotes = styled.div`
  display: flex;

  width: 750px;

  border: 1px solid #777777;
  background: #efefef;
`;

const Quote = styled.span`
  flex: none;

  width: ${(props) => props.$width}px;
  padding-right: ${(props) => props.$pad || 2}px;

  border-right: ${(props) => (props.$line ? "1px solid #bbbbbb" : "none")};

  line-height: 18px;
  text-align: right;
  white-space: nowrap;
  color: ${(props) => (props.$red ? "#e8190c" : "#000000")};
`;

const OrderButton = styled.button`
  width: 40px;
  height: 20px;

  border: 1px solid #8a8a8a;
  background: ${(props) => props.$color};

  font-size: 13px;
  line-height: 16px;
`;

const Frame = styled.section`
  display: flex;
  flex: 1;
  flex-direction: column;

  min-height: 0;

  border: 1px solid #949494;
  background: #ffffff;
`;

const Panel = styled.div`
  display: grid;
  grid-template-columns: 42px minmax(0, 1fr) 48px;
  grid-template-rows: minmax(0, 1fr);
  flex: ${(props) => props.$grow} 1 0;

  min-height: 0;

  border-bottom: 1px solid #949494;
`;

const Chart = styled.svg`
  display: block;

  width: 100%;
  height: 100%;

  shape-rendering: crispEdges;

  font-family: ${FONT};
  font-size: 12px;
`;

const AxisChart = styled(Chart)`
  font-size: 11px;
`;

const WideText = styled.text`
  font-size: 13px;
`;

const TimeRow = styled.div`
  flex: none;

  height: 17px;
`;

const Bottom = styled.footer`
  display: flex;
  align-items: center;
  flex: none;

  height: 18px;

  background: #ececec;
`;

const PlayButton = styled.button`
  display: flex;
  align-items: center;
  justify-content: center;

  width: 17px;
  height: 17px;

  border: 1px solid;
  border-color: #ffffff #777777 #777777 #ffffff;
  background: #ececec;
`;

const Track = styled.div`
  display: flex;
  flex: 1;

  height: 17px;
  padding: 0 14% 0 42%;

  background: #f6f6f6;
`;

const Thumb = styled.button`
  flex: 1;

  height: 17px;

  border: 1px solid;
  border-color: #ffffff #777777 #777777 #ffffff;
  background: #efefef;
`;

const SpeedBox = styled.div`
  display: flex;
  flex-direction: column;

  width: 70px;
  margin: 0 6px;
`;

const Speed = styled.input`
  width: 100%;
  height: 12px;

  appearance: none;

  background: linear-gradient(#888888, #888888) center / 100% 2px no-repeat;

  &::-webkit-slider-thumb {
    width: 4px;
    height: 12px;

    appearance: none;

    border: 1px solid #777777;
    background: #eeeeee;
  }
`;

const SpeedTicks = styled.div`
  height: 3px;

  background: repeating-linear-gradient(90deg, #333333 0 1px, transparent 1px 7px);
`;

const ToolIcon = styled.button`
  display: flex;
  align-items: center;
  justify-content: center;

  width: 17px;
  height: 17px;

  border: none;
  background: ${(props) => (props.$on ? "#ffffff" : "none")};

  font-size: 14px;
  font-weight: 700;
  color: #555555;
`;
